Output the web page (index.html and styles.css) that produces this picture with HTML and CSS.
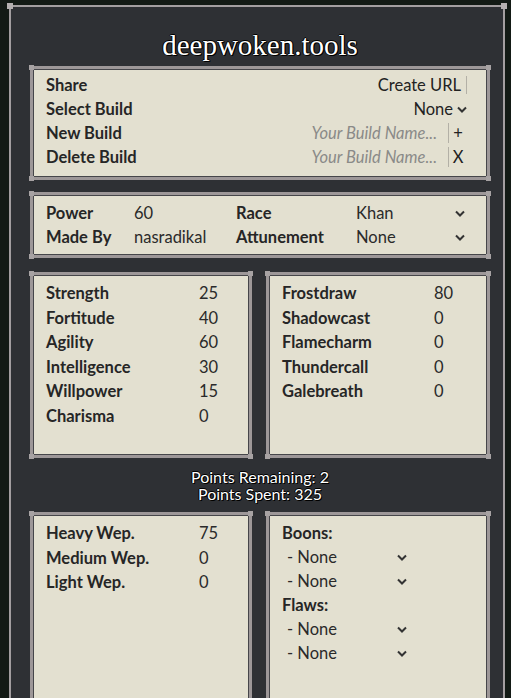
FILE: index.html
```html
<!DOCTYPE html>
<html lang="en">
<head>
    <meta charset="UTF-8">
    <title>deepwoken.tools</title>
    <link rel="stylesheet" href="styles.css">
</head>
<body>
<div class="frame">
    <h1 class="title">deepwoken.tools</h1>

    <div class="panel build">
        <div class="row">
            <span class="label">Share</span>
            <span class="right"><span>Create URL</span><span class="bar"></span></span>
        </div>
        <div class="row">
            <span class="label">Select Build</span>
            <span class="right"><span>None</span>
                <svg class="chev" viewBox="0 0 10 6"><polyline points="1,1 5,5 9,1"/></svg></span>
        </div>
        <div class="row">
            <span class="label">New Build</span>
            <span class="right"><span class="ph">Your Build Name...</span><span class="bar sep"></span><span class="btn">+</span></span>
        </div>
        <div class="row">
            <span class="label">Delete Build</span>
            <span class="right"><span class="ph">Your Build Name...</span><span class="bar sep"></span><span class="btn">X</span></span>
        </div>
    </div>

    <div class="panel info">
        <span class="label">Power</span><span>60</span>
        <span class="label">Race</span><span>Khan</span>
        <svg class="chev" viewBox="0 0 10 6"><polyline points="1,1 5,5 9,1"/></svg>
        <span class="label">Made By</span><span>nasradikal</span>
        <span class="label">Attunement</span><span>None</span>
        <svg class="chev" viewBox="0 0 10 6"><polyline points="1,1 5,5 9,1"/></svg>
    </div>

    <div class="pair">
        <div class="panel stats">
            <span class="label">Strength</span><span>25</span>
            <span class="label">Fortitude</span><span>40</span>
            <span class="label">Agility</span><span>60</span>
            <span class="label">Intelligence</span><span>30</span>
            <span class="label">Willpower</span><span>15</span>
            <span class="label">Charisma</span><span>0</span>
        </div>
        <div class="panel stats">
            <span class="label">Frostdraw</span><span>80</span>
            <span class="label">Shadowcast</span><span>0</span>
            <span class="label">Flamecharm</span><span>0</span>
            <span class="label">Thundercall</span><span>0</span>
            <span class="label">Galebreath</span><span>0</span>
        </div>
    </div>

    <div class="points">
        <div>Points Remaining: 2</div>
        <div>Points Spent: 325</div>
    </div>

    <div class="pair">
        <div class="panel stats tall">
            <span class="label">Heavy Wep.</span><span>75</span>
            <span class="label">Medium Wep.</span><span>0</span>
            <span class="label">Light Wep.</span><span>0</span>
        </div>
        <div class="panel traits tall">
            <div class="label">Boons:</div>
            <div class="pick"><span>- None</span><svg class="chev" viewBox="0 0 10 6"><polyline points="1,1 5,5 9,1"/></svg></div>
            <div class="pick"><span>- None</span><svg class="chev" viewBox="0 0 10 6"><polyline points="1,1 5,5 9,1"/></svg></div>
            <div class="label">Flaws:</div>
            <div class="pick"><span>- None</span><svg class="chev" viewBox="0 0 10 6"><polyline points="1,1 5,5 9,1"/></svg></div>
            <div class="pick"><span>- None</span><svg class="chev" viewBox="0 0 10 6"><polyline points="1,1 5,5 9,1"/></svg></div>
        </div>
    </div>
</div>
</body>
</html>
```

FILE: styles.css
```css
body {
    margin: 0;
    background: #131a15;
    font-family: Lato, sans-serif;
    font-size: 16.5px;
    color: #2a2a2a;
}

.frame {
    position: relative;
    margin: 5px 6px 0 9px;
    border: 2px solid #a39ea0;
    border-bottom: none;
    background: #2e3034;
    padding: 0 13px 40px 19px;
    display: flex;
    flex-direction: column;
}

.frame::before {
    content: "";
    position: absolute;
    top: -4px;
    left: -4px;
    right: -4px;
    height: 6px;
    background:
        linear-gradient(#b5b0b1, #b5b0b1) left top / 6px 6px no-repeat,
        linear-gradient(#b5b0b1, #b5b0b1) right top / 6px 6px no-repeat;
    pointer-events: none;
}

.title {
    margin: 0;
    padding: 23px 0 5px;
    text-align: center;
    font-family: "Liberation Serif", serif;
    font-weight: normal;
    font-size: 29px;
    line-height: 31px;
    color: #fff;
    text-shadow: 1px 1px 0 #000, -1px 0 0 #000, 0 -1px 0 #000, 1px 0 0 #000;
}

.panel {
    position: relative;
    background: #e3e0d0;
    border: 3px solid #9d9798;
    box-shadow: inset 0 0 0 1px #46464a;
    padding: 6px 20px 6px 13px;
    line-height: 24px;
}

.panel::before {
    content: "";
    position: absolute;
    top: -4px;
    left: -4px;
    right: -4px;
    bottom: -4px;
    background:
        linear-gradient(#a7a2a3, #a7a2a3) left top / 5px 5px no-repeat,
        linear-gradient(#a7a2a3, #a7a2a3) right top / 5px 5px no-repeat,
        linear-gradient(#a7a2a3, #a7a2a3) left bottom / 5px 5px no-repeat,
        linear-gradient(#a7a2a3, #a7a2a3) right bottom / 5px 5px no-repeat;
    pointer-events: none;
}

.label {
    font-weight: bold;
    color: #262626;
}

.build {
    padding-top: 4px;
    padding-bottom: 8px;
    margin-bottom: 12px;
}

.row {
    display: flex;
    justify-content: space-between;
}

.right {
    display: flex;
    align-items: center;
    color: #222;
}

.bar {
    width: 1px;
    height: 18px;
    background: #b3b0a6;
    margin-left: 5px;
}

.bar.sep {
    margin: 0 0 0 11px;
    height: 20px;
}

.ph {
    font-style: italic;
    color: #8a8a88;
}

.btn {
    width: 18px;
    text-align: center;
}

.chev {
    width: 10px;
    height: 7px;
    margin-left: 4px;
    fill: none;
    stroke: #333;
    stroke-width: 2;
}

.info {
    display: grid;
    grid-template-columns: 88px 102px 120px 1fr 12px;
    align-items: center;
    margin-bottom: 14px;
}

.info .chev {
    margin: 0;
}

.pair {
    display: grid;
    grid-template-columns: 222px 224px;
    column-gap: 14px;
}

.stats {
    display: grid;
    grid-template-columns: 153px 1fr;
    align-content: start;
    line-height: 24.5px;
    min-height: 168px;
}

.pair .stats + .stats {
    grid-template-columns: 152px 1fr;
}

.tall {
    min-height: 190px;
}

.traits {
    line-height: 24px;
}

.pick {
    display: flex;
    align-items: center;
    padding-left: 5px;
}

.pick span {
    width: 106px;
}

.points {
    text-align: center;
    color: #fff;
    font-size: 16px;
    line-height: 17px;
    padding: 10px 0 10px;
    text-shadow: 1px 1px 0 #000, -1px 0 0 #000, 0 -1px 0 #000;
}
```
